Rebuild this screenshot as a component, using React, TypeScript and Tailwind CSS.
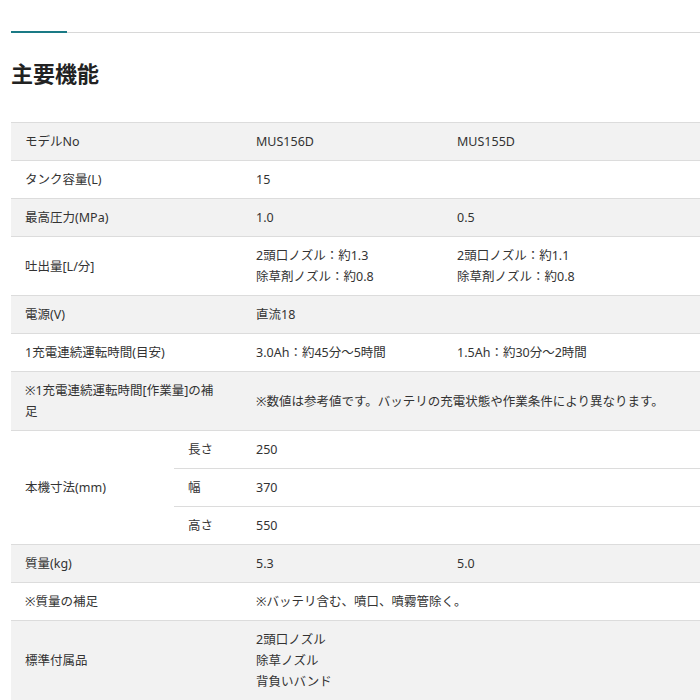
import React from "react";

const G = "bg-[#f2f2f2]";
const td = "pl-[14px] pr-2 py-[8px] align-middle";

function Row({ bg, label, a, b, span = false }: { bg: string; label: React.ReactNode; a: React.ReactNode; b?: React.ReactNode; span?: boolean }) {
  return (
    <tr className={`${bg} border-b border-[#dcdcdc]`}>
      <td colSpan={2} className={`${td} h-[37px]`}>{label}</td>
      {span ? (
        <td colSpan={2} className={td}>{a}</td>
      ) : (
        <>
          <td className={td}>{a}</td>
          <td className={td}>{b}</td>
        </>
      )}
    </tr>
  );
}

export default function App() {
  return (
    <div className="bg-white w-[700px] h-[700px] overflow-hidden text-[#333] text-[12.5px] leading-[21px]" style={{ fontFamily: '"Noto Sans", "Noto Sans CJK JP", sans-serif' }}>
      <div className="pt-[31px] pl-[11px]">
        <div className="flex h-[2px]">
          <div className="w-[56px] bg-[#1a7a85]" />
          <div className="flex-1 bg-[#d8d8d8] h-[1px] mt-[1px]" />
        </div>
        <h2 className="text-[22px] font-bold leading-[30px] mt-[25px] text-[#222]">主要機能</h2>
        <table className="mt-[34px] w-[689px] border-collapse border-t border-[#dcdcdc] table-fixed">
          <colgroup>
            <col className="w-[163px]" />
            <col className="w-[68px]" />
            <col className="w-[201px]" />
            <col />
          </colgroup>
          <tbody>
            <Row bg={G} label="モデルNo" a="MUS156D" b="MUS155D" />
            <Row bg="bg-white" label="タンク容量(L)" a="15" b="" />
            <Row bg={G} label="最高圧力(MPa)" a="1.0" b="0.5" />
            <Row bg="bg-white" label="吐出量[L/分]" a={<>2頭口ノズル：約1.3<br />除草剤ノズル：約0.8</>} b={<>2頭口ノズル：約1.1<br />除草剤ノズル：約0.8</>} />
            <Row bg={G} label="電源(V)" a="直流18" b="" />
            <Row bg="bg-white" label="1充電連続運転時間(目安)" a="3.0Ah：約45分～5時間" b="1.5Ah：約30分～2時間" />
            <Row bg={G} label={<>※1充電連続運転時間[作業量]の補<br />足</>} a="※数値は参考値です。バッテリの充電状態や作業条件により異なります。" span />
            <tr className="bg-white border-b border-[#dcdcdc]">
              <td rowSpan={3} className={td}>本機寸法(mm)</td>
              <td className={`${td} h-[37px]`}>長さ</td>
              <td className={td}>250</td>
              <td />
            </tr>
            <tr className="bg-white border-b border-[#dcdcdc]">
              <td className={`${td} h-[37px]`}>幅</td>
              <td className={td}>370</td>
              <td />
            </tr>
            <tr className="bg-white border-b border-[#dcdcdc]">
              <td className={`${td} h-[37px]`}>高さ</td>
              <td className={td}>550</td>
              <td />
            </tr>
            <Row bg={G} label="質量(kg)" a="5.3" b="5.0" />
            <Row bg="bg-white" label="※質量の補足" a="※バッテリ含む、噴口、噴霧管除く。" span />
            <Row bg={G} label="標準付属品" a={<>2頭口ノズル<br />除草ノズル<br />背負いバンド</>} span />
          </tbody>
        </table>
      </div>
    </div>
  );
}
